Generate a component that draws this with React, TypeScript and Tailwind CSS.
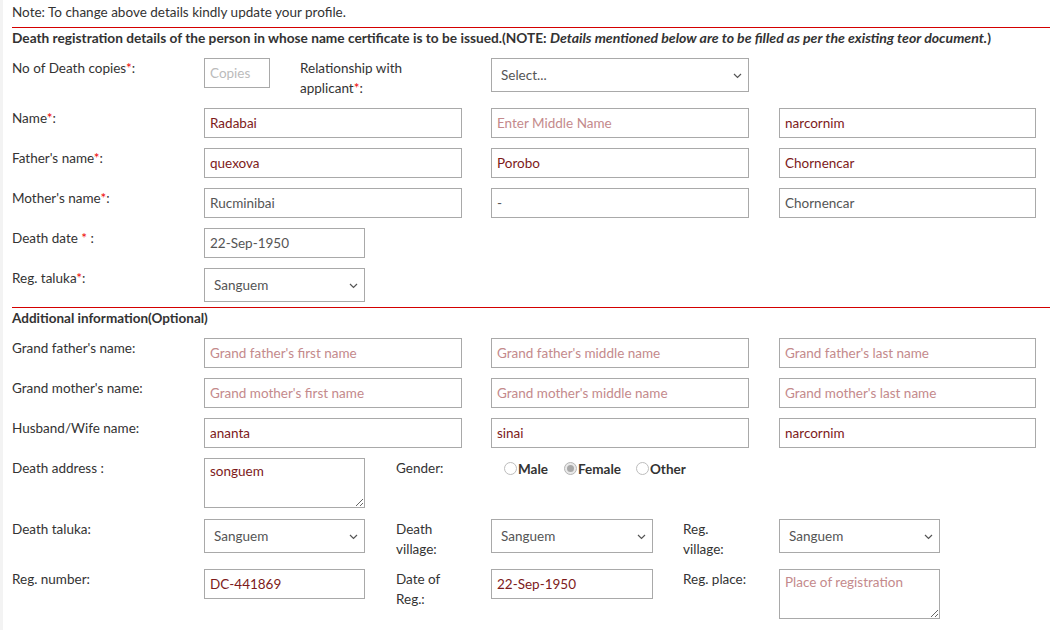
import React from "react";

const F = "font-['Lato','Noto_Sans',sans-serif]";

function Star() {
  return <span className="text-[#e00]">*</span>;
}

function Label({ w, children, className = "" }: { w: string; children: React.ReactNode; className?: string }) {
  return <div className={`${w} shrink-0 leading-5 text-[#333] ${className}`}>{children}</div>;
}

type Tone = "val" | "ro";

function TextInput({
  w,
  value,
  placeholder,
  tone = "val",
  light = false,
  className = "",
}: {
  w: string;
  value?: string;
  placeholder?: string;
  tone?: Tone;
  light?: boolean;
  className?: string;
}) {
  const color = tone === "ro" ? "text-[#555]" : "text-[#7d1a1a]";
  const ph = light ? "placeholder:text-[#bbb]" : "placeholder:text-[#c48a8c]";
  return (
    <input
      readOnly
      value={value ?? ""}
      placeholder={placeholder}
      className={`${w} h-[30px] shrink-0 border border-[#a9a9a9] bg-white px-[5px] text-[13.5px] ${color} ${ph} outline-none ${className}`}
    />
  );
}

function Select({ w, value, className = "" }: { w: string; value: string; className?: string }) {
  return (
    <div className={`relative ${w} h-[34px] shrink-0 ${className}`}>
      <select
        value={value}
        onChange={() => {}}
        className="h-full w-full appearance-none border border-[#a9a9a9] bg-white pl-[9px] pr-6 text-[13.5px] text-[#555] outline-none"
      >
        <option>{value}</option>
      </select>
      <svg className="pointer-events-none absolute right-[7px] top-[15px]" width="9" height="6" viewBox="0 0 9 6">
        <polyline points="1,1 4.5,4.5 8,1" fill="none" stroke="#555" strokeWidth="1.2" />
      </svg>
    </div>
  );
}

function Area({ w, value, placeholder, className = "" }: { w: string; value?: string; placeholder?: string; className?: string }) {
  return (
    <textarea
      readOnly
      value={value ?? ""}
      placeholder={placeholder}
      className={`${w} h-[50px] shrink-0 border border-[#a9a9a9] bg-white px-[5px] pt-[2px] text-[13.5px] leading-5 text-[#7d1a1a] placeholder:text-[#c48a8c] outline-none ${className}`}
    />
  );
}

function Radio({ label, checked, className = "" }: { label: string; checked?: boolean; className?: string }) {
  return (
    <label className={`flex items-center font-bold text-[#333] ${className}`}>
      <span
        className={`mr-[1px] flex h-[13px] w-[13px] items-center justify-center rounded-full border ${
          checked ? "border-[#b5b5b5] bg-[#e9e9e9]" : "border-[#bdbdbd] bg-white"
        }`}
      >
        {checked && <span className="h-[7px] w-[7px] rounded-full bg-[#a8a8a8]" />}
      </span>
      {label}
    </label>
  );
}

function Row({ children, className = "" }: { children: React.ReactNode; className?: string }) {
  return <div className={`flex items-start ${className}`}>{children}</div>;
}

export default function App() {
  return (
    <div className={`${F} min-h-[630px] w-[1050px] overflow-hidden border-l-[3px] border-[#f3f3f3] bg-white pl-[9px] pt-[2px] text-[13.5px] text-[#333]`}>
      <div className="leading-5">Note: To change above details kindly update your profile.</div>
      <div className="mt-[5px] h-px bg-[#d40000]" />
      <div className="whitespace-nowrap text-[13.7px] font-bold leading-5">
        Death registration details of the person in whose name certificate is to be issued.(NOTE:{" "}
        <i className="text-[14.1px]">Details mentioned below are to be filled as per the existing teor document.</i>)
      </div>

      <div className="mt-[10px] flex flex-col gap-[10px]">
        <Row>
          <Label w="w-[192px]">
            No of Death copies<Star />:
          </Label>
          <TextInput w="w-[66px]" placeholder="Copies" light />
          <Label w="w-[191px]" className="ml-[30px]">
            Relationship with
            <br />
            applicant<Star />:
          </Label>
          <Select w="w-[258px]" value="Select..." />
        </Row>

        <Row>
          <Label w="w-[192px]">
            Name<Star />:
          </Label>
          <TextInput w="w-[258px]" value="Radabai" />
          <TextInput w="w-[258px]" className="ml-[29px]" placeholder="Enter Middle Name" />
          <TextInput w="w-[257px]" className="ml-[30px]" value="narcornim" />
        </Row>

        <Row>
          <Label w="w-[192px]">
            Father's name<Star />:
          </Label>
          <TextInput w="w-[258px]" value="quexova" />
          <TextInput w="w-[258px]" className="ml-[29px]" value="Porobo" />
          <TextInput w="w-[257px]" className="ml-[30px]" value="Chornencar" />
        </Row>

        <Row>
          <Label w="w-[192px]">
            Mother's name<Star />:
          </Label>
          <TextInput w="w-[258px]" value="Rucminibai" tone="ro" />
          <TextInput w="w-[258px]" className="ml-[29px]" value="-" tone="ro" />
          <TextInput w="w-[257px]" className="ml-[30px]" value="Chornencar" tone="ro" />
        </Row>

        <Row>
          <Label w="w-[192px]">
            Death date <Star /> :
          </Label>
          <TextInput w="w-[161px]" value="22-Sep-1950" tone="ro" />
        </Row>

        <Row>
          <Label w="w-[192px]">
            Reg. taluka<Star />:
          </Label>
          <Select w="w-[161px]" value="Sanguem" />
        </Row>
      </div>

      <div className="mt-[5px] h-px bg-[#d40000]" />
      <div className="font-bold leading-5">Additional information(Optional)</div>

      <div className="mt-[10px] flex flex-col gap-[10px]">
        <Row>
          <Label w="w-[192px]">Grand father's name:</Label>
          <TextInput w="w-[258px]" placeholder="Grand father's first name" />
          <TextInput w="w-[258px]" className="ml-[29px]" placeholder="Grand father's middle name" />
          <TextInput w="w-[257px]" className="ml-[30px]" placeholder="Grand father's last name" />
        </Row>

        <Row>
          <Label w="w-[192px]">Grand mother's name:</Label>
          <TextInput w="w-[258px]" placeholder="Grand mother's first name" />
          <TextInput w="w-[258px]" className="ml-[29px]" placeholder="Grand mother's middle name" />
          <TextInput w="w-[257px]" className="ml-[30px]" placeholder="Grand mother's last name" />
        </Row>

        <Row>
          <Label w="w-[192px]">Husband/Wife name:</Label>
          <TextInput w="w-[258px]" value="ananta" />
          <TextInput w="w-[258px]" className="ml-[29px]" value="sinai" />
          <TextInput w="w-[257px]" className="ml-[30px]" value="narcornim" />
        </Row>

        <Row className="mb-[1px]">
          <Label w="w-[192px]">Death address :</Label>
          <Area w="w-[161px]" value="songuem" />
          <Label w="w-[95px]" className="ml-[31px]">
            Gender:
          </Label>
          <div className="ml-[13px] flex h-[21px] items-end">
            <Radio label="Male" />
            <Radio label="Female" checked className="ml-[16px]" />
            <Radio label="Other" className="ml-[15px]" />
          </div>
        </Row>

        <Row>
          <Label w="w-[192px]">Death taluka:</Label>
          <Select w="w-[161px]" value="Sanguem" />
          <Label w="w-[95px]" className="ml-[31px]">
            Death
            <br />
            village:
          </Label>
          <Select w="w-[162px]" value="Sanguem" />
          <Label w="w-[96px]" className="ml-[30px]">
            Reg.
            <br />
            village:
          </Label>
          <Select w="w-[161px]" value="Sanguem" />
        </Row>

        <Row>
          <Label w="w-[192px]">Reg. number:</Label>
          <TextInput w="w-[161px]" value="DC-441869" />
          <Label w="w-[95px]" className="ml-[31px]">
            Date of
            <br />
            Reg.:
          </Label>
          <TextInput w="w-[162px]" value="22-Sep-1950" />
          <Label w="w-[96px]" className="ml-[30px]">
            Reg. place:
          </Label>
          <Area w="w-[161px]" placeholder="Place of registration" />
        </Row>
      </div>
    </div>
  );
}
